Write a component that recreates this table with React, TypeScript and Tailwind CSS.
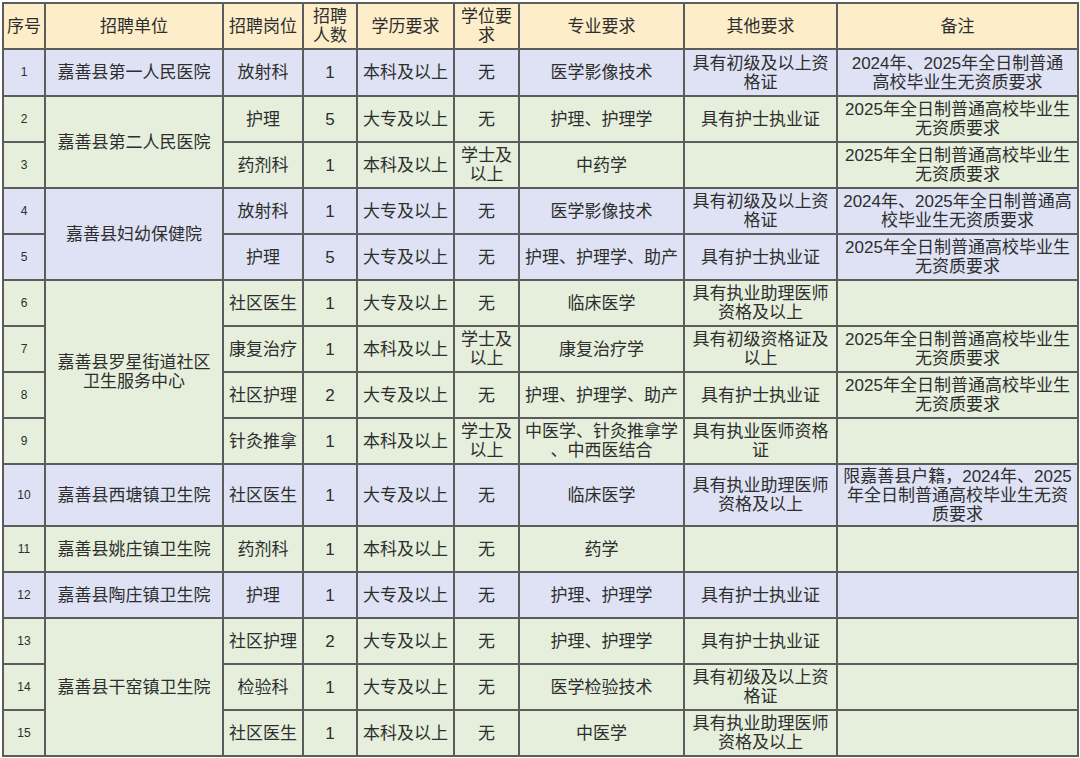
type Row = {
  no: number;
  unit?: string[];
  span?: number;
  post: string;
  num: string;
  edu: string;
  degree: string[];
  major: string[];
  other: string[];
  note: string[];
  tone: "blue" | "green";
  h?: number;
};

const rows: Row[] = [
  { no: 1, unit: ["嘉善县第一人民医院"], span: 1, post: "放射科", num: "1", edu: "本科及以上", degree: ["无"], major: ["医学影像技术"], other: ["具有初级及以上资", "格证"], note: ["2024年、2025年全日制普通", "高校毕业生无资质要求"], tone: "blue", h: 47 },
  { no: 2, unit: ["嘉善县第二人民医院"], span: 2, post: "护理", num: "5", edu: "大专及以上", degree: ["无"], major: ["护理、护理学"], other: ["具有护士执业证"], note: ["2025年全日制普通高校毕业生", "无资质要求"], tone: "green" },
  { no: 3, post: "药剂科", num: "1", edu: "本科及以上", degree: ["学士及", "以上"], major: ["中药学"], other: [], note: ["2025年全日制普通高校毕业生", "无资质要求"], tone: "green" },
  { no: 4, unit: ["嘉善县妇幼保健院"], span: 2, post: "放射科", num: "1", edu: "大专及以上", degree: ["无"], major: ["医学影像技术"], other: ["具有初级及以上资", "格证"], note: ["2024年、2025年全日制普通高", "校毕业生无资质要求"], tone: "blue" },
  { no: 5, post: "护理", num: "5", edu: "大专及以上", degree: ["无"], major: ["护理、护理学、助产"], other: ["具有护士执业证"], note: ["2025年全日制普通高校毕业生", "无资质要求"], tone: "blue" },
  { no: 6, unit: ["嘉善县罗星街道社区", "卫生服务中心"], span: 4, post: "社区医生", num: "1", edu: "大专及以上", degree: ["无"], major: ["临床医学"], other: ["具有执业助理医师", "资格及以上"], note: [], tone: "green" },
  { no: 7, post: "康复治疗", num: "1", edu: "本科及以上", degree: ["学士及", "以上"], major: ["康复治疗学"], other: ["具有初级资格证及", "以上"], note: ["2025年全日制普通高校毕业生", "无资质要求"], tone: "green" },
  { no: 8, post: "社区护理", num: "2", edu: "大专及以上", degree: ["无"], major: ["护理、护理学、助产"], other: ["具有护士执业证"], note: ["2025年全日制普通高校毕业生", "无资质要求"], tone: "green" },
  { no: 9, post: "针灸推拿", num: "1", edu: "本科及以上", degree: ["学士及", "以上"], major: ["中医学、针灸推拿学", "、中西医结合"], other: ["具有执业医师资格", "证"], note: [], tone: "green" },
  { no: 10, unit: ["嘉善县西塘镇卫生院"], span: 1, post: "社区医生", num: "1", edu: "大专及以上", degree: ["无"], major: ["临床医学"], other: ["具有执业助理医师", "资格及以上"], note: ["限嘉善县户籍，2024年、2025", "年全日制普通高校毕业生无资", "质要求"], tone: "blue", h: 62 },
  { no: 11, unit: ["嘉善县姚庄镇卫生院"], span: 1, post: "药剂科", num: "1", edu: "本科及以上", degree: ["无"], major: ["药学"], other: [], note: [], tone: "green" },
  { no: 12, unit: ["嘉善县陶庄镇卫生院"], span: 1, post: "护理", num: "1", edu: "大专及以上", degree: ["无"], major: ["护理、护理学"], other: ["具有护士执业证"], note: [], tone: "blue" },
  { no: 13, unit: ["嘉善县干窑镇卫生院"], span: 3, post: "社区护理", num: "2", edu: "大专及以上", degree: ["无"], major: ["护理、护理学"], other: ["具有护士执业证"], note: [], tone: "green" },
  { no: 14, post: "检验科", num: "1", edu: "大专及以上", degree: ["无"], major: ["医学检验技术"], other: ["具有初级及以上资", "格证"], note: [], tone: "green" },
  { no: 15, post: "社区医生", num: "1", edu: "本科及以上", degree: ["无"], major: ["中医学"], other: ["具有执业助理医师", "资格及以上"], note: [], tone: "green" },
];

const cell = "border-2 border-[#5c5c5c] text-center align-middle px-0 py-0 whitespace-nowrap leading-[19px]";

function Lines({ lines }: { lines: string[] }) {
  return (
    <>
      {lines.map((l, i) => (
        <div key={i}>{l}</div>
      ))}
    </>
  );
}

export default function App() {
  return (
    <div className="w-[1080px] h-[758px] bg-white pt-[2px] pl-[2px] font-['Liberation_Sans','Noto_Sans_CJK_SC',sans-serif] text-[17px] text-[#2e2e2e]">
      <table className="table-fixed border-collapse w-[1075px]">
        <colgroup>
          <col className="w-[42px]" />
          <col className="w-[178px]" />
          <col className="w-[80px]" />
          <col className="w-[54px]" />
          <col className="w-[97px]" />
          <col className="w-[65px]" />
          <col className="w-[165px]" />
          <col className="w-[153px]" />
          <col className="w-[241px]" />
        </colgroup>
        <thead>
          <tr className="h-[46px] bg-[#fdeec9]">
            <th className={`${cell} font-normal`}>序号</th>
            <th className={`${cell} font-normal`}>招聘单位</th>
            <th className={`${cell} font-normal`}>招聘岗位</th>
            <th className={`${cell} font-normal`}><Lines lines={["招聘", "人数"]} /></th>
            <th className={`${cell} font-normal`}>学历要求</th>
            <th className={`${cell} font-normal`}><Lines lines={["学位要", "求"]} /></th>
            <th className={`${cell} font-normal`}>专业要求</th>
            <th className={`${cell} font-normal`}>其他要求</th>
            <th className={`${cell} font-normal`}>备注</th>
          </tr>
        </thead>
        <tbody>
          {rows.map((r) => (
            <tr
              key={r.no}
              className={`${r.tone === "blue" ? "bg-[#dee2f4]" : "bg-[#e5efdc]"} ${r.h === 62 ? "h-[62px]" : r.h === 47 ? "h-[47px]" : "h-[46px]"}`}
            >
              <td className={`${cell} text-[12px]`}>{r.no}</td>
              {r.unit && (
                <td className={cell} rowSpan={r.span}>
                  <Lines lines={r.unit} />
                </td>
              )}
              <td className={cell}>{r.post}</td>
              <td className={cell}>{r.num}</td>
              <td className={cell}>{r.edu}</td>
              <td className={cell}><Lines lines={r.degree} /></td>
              <td className={cell}><Lines lines={r.major} /></td>
              <td className={cell}><Lines lines={r.other} /></td>
              <td className={cell}><Lines lines={r.note} /></td>
            </tr>
          ))}
        </tbody>
      </table>
    </div>
  );
}
